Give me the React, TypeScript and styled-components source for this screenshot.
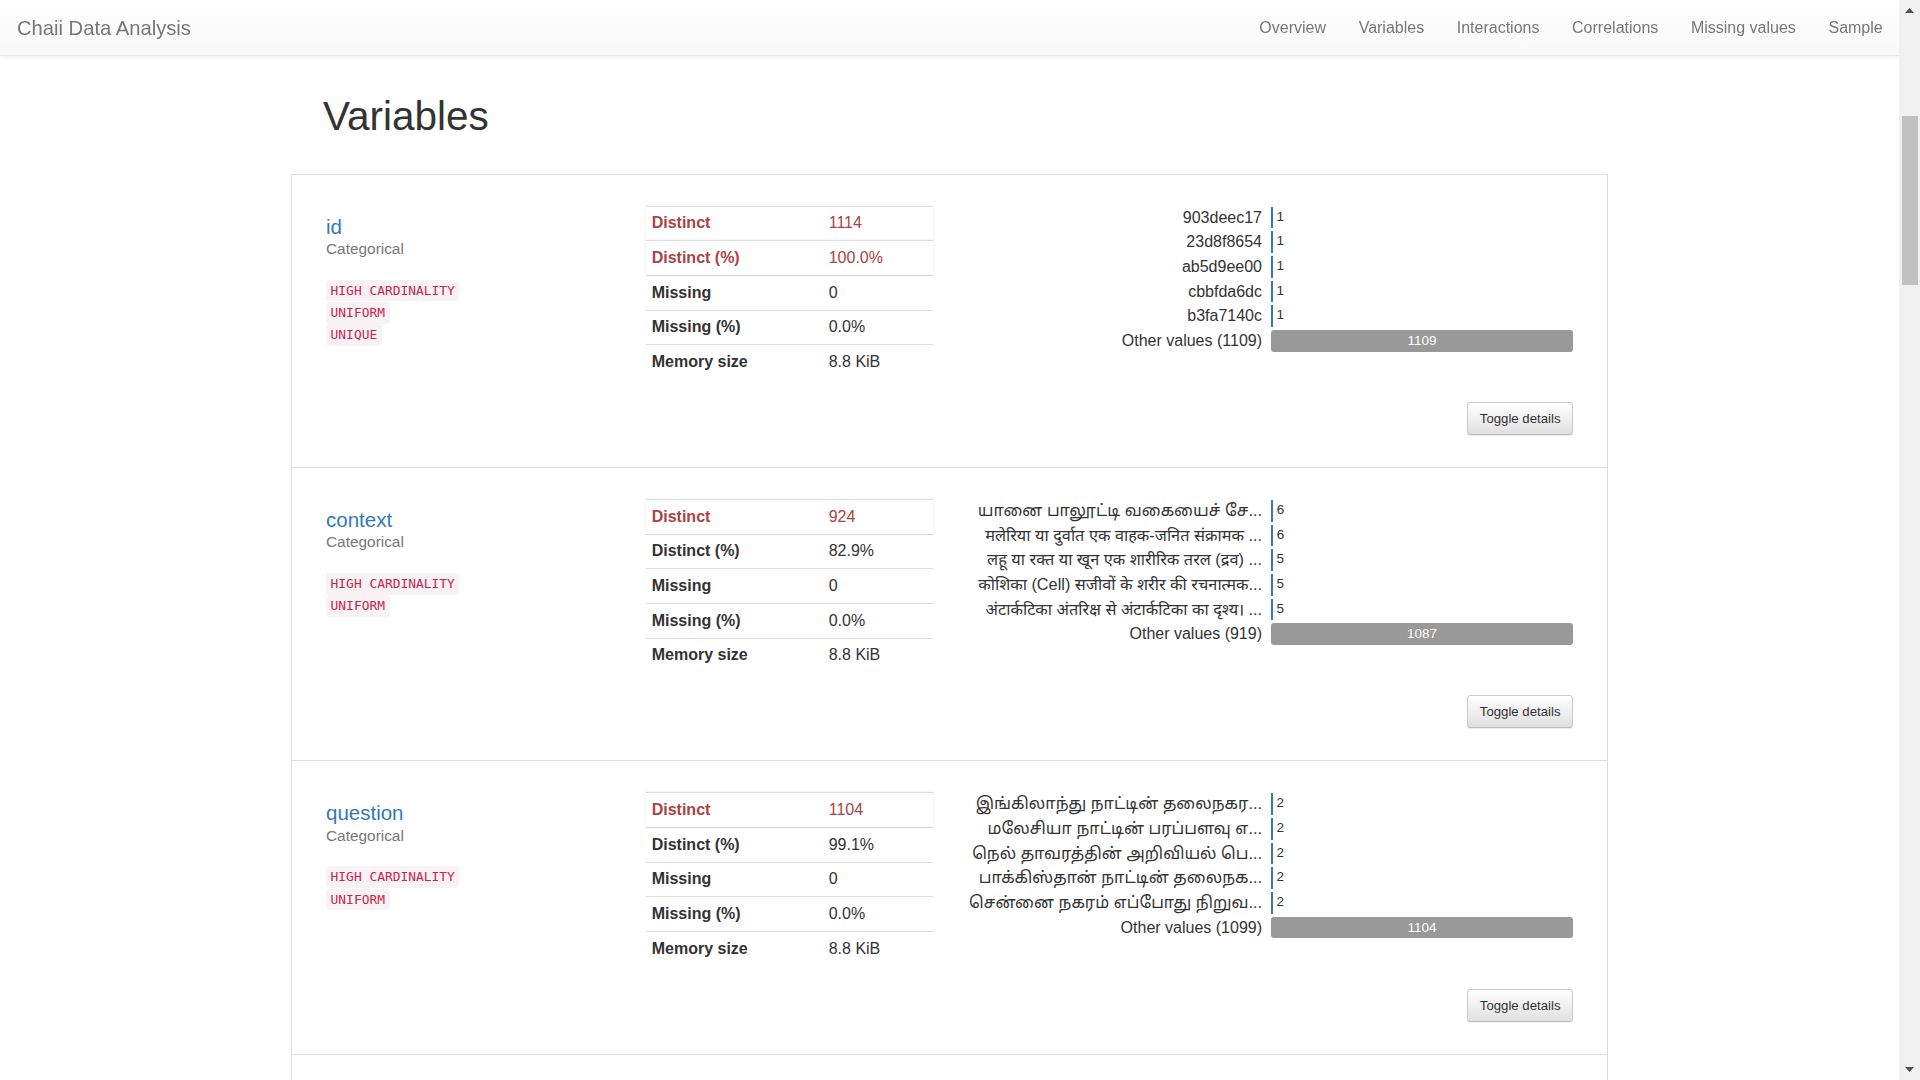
import React from 'react';
import styled, { createGlobalStyle } from 'styled-components';

const GlobalStyle = createGlobalStyle`
  html, body {
    margin: 0;
    padding: 0;
    background: #fff;
  }
  body {
    font-family: "Liberation Sans", Arial, "Noto Sans Tamil", "Noto Sans Devanagari", "Lohit Tamil", "Lohit Devanagari", "FreeSans", sans-serif;
    font-size: 16px;
    line-height: 1.42857;
    color: #333;
  }
  *, *::before, *::after {
    box-sizing: border-box;
  }
`;

/* Window: page column + classic scrollbar rail */
const Shell = styled.div`
  display: grid;
  grid-template-columns: 1fr 21px;
  height: 100vh;
  overflow: hidden;
`;

const MainColumn = styled.div`
  min-width: 0;
  height: 100vh;
  overflow: hidden;
`;

const ScrollRail = styled.div`
  display: flex;
  flex-direction: column;
  height: 100vh;
  background: #f1f1f1;
`;

const ScrollButton = styled.div`
  flex: none;
  height: 21px;
  display: flex;
  align-items: center;
  justify-content: center;
`;

const ScrollTrack = styled.div`
  flex: 1;
  padding: 95px 2.5px 0;
`;

const ScrollThumb = styled.div`
  height: 169px;
  background: #c1c1c1;
`;

const Navbar = styled.nav`
  position: sticky;
  top: 0;
  z-index: 10;
  height: 56px;
  display: flex;
  align-items: center;
  justify-content: space-between;
  padding: 0 0 0 17px;
  background-image: linear-gradient(to bottom, #ffffff 0, #f8f8f8 100%);
  border-bottom: 1px solid #e7e7e7;
  box-shadow: 0 1px 5px rgba(0, 0, 0, 0.075);
`;

const Brand = styled.a`
  font-size: 20.2px;
  line-height: 56px;
  color: #777;
  text-decoration: none;
`;

const NavList = styled.ul`
  display: flex;
  list-style: none;
  margin: 0;
  padding: 0;
`;

const NavLink = styled.a`
  display: block;
  padding: 0 16.3px;
  font-size: 16px;
  line-height: 54px;
  color: #777;
  text-decoration: none;
`;

const Page = styled.main`
  padding-bottom: 40px;
`;

const Container = styled.div`
  width: 1317px;
  margin: 0 auto;
`;

const Section = styled.section`
  display: flow-root;
  padding-top: 38px;
`;

const SectionTitle = styled.h1`
  margin: 0 0 35px 32px;
  font-size: 40.5px;
  font-weight: 500;
  line-height: 1.1;
  color: #333;
`;

const VariableList = styled.div`
  display: flex;
  flex-direction: column;
`;

const VariableCard = styled.article`
  border: 1px solid #ddd;
  margin-bottom: -1px;
  padding: 31px 34px 32px;
  background: #fff;
`;

const VarGrid = styled.div`
  display: grid;
  grid-template-columns: 320px 287px 1fr;
  align-items: start;
`;

const InfoColumn = styled.div`
  display: flex;
  flex-direction: column;
  align-items: flex-start;
`;

const VarName = styled.p`
  margin: 10px 0 19px;
  font-size: 20.5px;
  line-height: 1.1;
`;

const VarLink = styled.a`
  color: #337ab7;
  text-decoration: none;
`;

const VarType = styled.small`
  display: block;
  font-size: 15.4px;
  line-height: 22.5px;
  color: #777;
`;

const Badges = styled.div`
  display: flex;
  flex-direction: column;
  align-items: flex-start;
  gap: 0.5px;
`;

const Badge = styled.code`
  font-family: "DejaVu Sans Mono", "Liberation Mono", monospace;
  font-size: 12.9px;
  line-height: 15.7px;
  padding: 3px 4.6px;
  color: #c7254e;
  background: #f9f2f4;
  border-radius: 4px;
`;

const StatsTable = styled.div`
  display: flex;
  flex-direction: column;
  margin-bottom: 23px;
`;

const StatRow = styled.div<{ $alert?: boolean }>`
  display: grid;
  grid-template-columns: 177px 1fr;
  border-top: 1px solid #ddd;
  color: ${(p) => (p.$alert ? '#a94442' : '#333')};
  background: #fff;
  box-shadow: ${(p) => (p.$alert ? '0 0 3px rgba(0, 0, 0, 0.09)' : 'none')};
  position: ${(p) => (p.$alert ? 'relative' : 'static')};
`;

const StatLabel = styled.div`
  padding: 5.7px;
  line-height: 22.3px;
  font-weight: bold;
`;

const StatValue = styled.div`
  padding: 5.7px;
  line-height: 22.3px;
`;

const FreqTable = styled.div`
  display: flex;
  flex-direction: column;
  gap: 3px;
  padding: 1px 0 0 33px;
`;

const FreqRow = styled.div`
  display: grid;
  grid-template-columns: 296px 1fr;
  column-gap: 9px;
  height: 21.7px;
  align-items: center;
`;

const FreqLabel = styled.div<{ $native?: boolean }>`
  display: flex;
  justify-content: flex-end;
  white-space: nowrap;
  font-size: ${(p) => (p.$native ? '16.3px' : '16px')};
  line-height: 21.7px;
  color: #333;
`;

const BarCell = styled.div`
  display: flex;
  align-items: center;
  height: 100%;
`;

const Bar = styled.div<{ $other?: boolean }>`
  height: 100%;
  min-width: 1.5px;
  flex: none;
  display: flex;
  align-items: center;
  justify-content: center;
  background: ${(p) => (p.$other ? '#999' : '#337ab7')};
  border-radius: ${(p) => (p.$other ? '3px' : '0')};
  color: #fff;
  font-size: 13.5px;
  line-height: 1;
`;

const OutsideCount = styled.span`
  margin-left: 4px;
  font-size: 13.5px;
  line-height: 1;
  color: #333;
  transform: translateY(-1.5px);
`;

const ToggleRow = styled.div`
  display: flex;
  justify-content: flex-end;
`;

const ToggleButton = styled.button`
  height: 33px;
  padding: 0 11.5px;
  font-family: inherit;
  font-size: 13.2px;
  color: #333;
  background-image: linear-gradient(to bottom, #ffffff 0, #e0e0e0 100%);
  border: 1px solid #ccc;
  border-bottom-color: #bdbdbd;
  border-radius: 3.4px;
  box-shadow: inset 0 1px 0 rgba(255, 255, 255, 0.15), 0 1px 1px rgba(0, 0, 0, 0.075);
  cursor: pointer;
`;

type Stat = { label: string; value: string; alert?: boolean };
type Freq = { label: string; count: number };
type Variable = {
  name: string;
  badges: string[];
  stats: Stat[];
  freq: Freq[];
  other: Freq;
};

const variables: Variable[] = [
  {
    name: 'id',
    badges: ['HIGH CARDINALITY', 'UNIFORM', 'UNIQUE'],
    stats: [
      { label: 'Distinct', value: '1114', alert: true },
      { label: 'Distinct (%)', value: '100.0%', alert: true },
      { label: 'Missing', value: '0' },
      { label: 'Missing (%)', value: '0.0%' },
      { label: 'Memory size', value: '8.8 KiB' },
    ],
    freq: [
      { label: '903deec17', count: 1 },
      { label: '23d8f8654', count: 1 },
      { label: 'ab5d9ee00', count: 1 },
      { label: 'cbbfda6dc', count: 1 },
      { label: 'b3fa7140c', count: 1 },
    ],
    other: { label: 'Other values (1109)', count: 1109 },
  },
  {
    name: 'context',
    badges: ['HIGH CARDINALITY', 'UNIFORM'],
    stats: [
      { label: 'Distinct', value: '924', alert: true },
      { label: 'Distinct (%)', value: '82.9%' },
      { label: 'Missing', value: '0' },
      { label: 'Missing (%)', value: '0.0%' },
      { label: 'Memory size', value: '8.8 KiB' },
    ],
    freq: [
      { label: 'யானை பாலூட்டி வகையைச் சே...', count: 6 },
      { label: 'मलेरिया या दुर्वात एक वाहक-जनित संक्रामक ...', count: 6 },
      { label: 'लहू या रक्त या खून एक शारीरिक तरल (द्रव) ...', count: 5 },
      { label: 'कोशिका (Cell) सजीवों के शरीर की रचनात्मक...', count: 5 },
      { label: 'अंटार्कटिका अंतरिक्ष से अंटार्कटिका का दृश्य। ...', count: 5 },
    ],
    other: { label: 'Other values (919)', count: 1087 },
  },
  {
    name: 'question',
    badges: ['HIGH CARDINALITY', 'UNIFORM'],
    stats: [
      { label: 'Distinct', value: '1104', alert: true },
      { label: 'Distinct (%)', value: '99.1%' },
      { label: 'Missing', value: '0' },
      { label: 'Missing (%)', value: '0.0%' },
      { label: 'Memory size', value: '8.8 KiB' },
    ],
    freq: [
      { label: 'இங்கிலாந்து நாட்டின் தலைநகர...', count: 2 },
      { label: 'மலேசியா நாட்டின் பரப்பளவு எ...', count: 2 },
      { label: 'நெல் தாவரத்தின் அறிவியல் பெ...', count: 2 },
      { label: 'பாக்கிஸ்தான் நாட்டின் தலைநக...', count: 2 },
      { label: 'சென்னை நகரம் எப்போது நிறுவ...', count: 2 },
    ],
    other: { label: 'Other values (1099)', count: 1104 },
  },
  {
    name: 'answer_text',
    badges: ['HIGH CARDINALITY'],
    stats: [
      { label: 'Distinct', value: '963', alert: true },
      { label: 'Distinct (%)', value: '86.4%' },
      { label: 'Missing', value: '0' },
      { label: 'Missing (%)', value: '0.0%' },
      { label: 'Memory size', value: '8.8 KiB' },
    ],
    freq: [
      { label: '1947', count: 10 },
      { label: 'இந்தியா', count: 8 },
      { label: 'भारत', count: 7 },
      { label: '1948', count: 6 },
      { label: 'சென்னை', count: 5 },
    ],
    other: { label: 'Other values (958)', count: 1078 },
  },
];

const navItems = ['Overview', 'Variables', 'Interactions', 'Correlations', 'Missing values', 'Sample'];

const isNative = (s: string) => /[^\u0000-\u024f]/.test(s);

function FrequencyTable({ freq, other }: { freq: Freq[]; other: Freq }) {
  const max = Math.max(other.count, ...freq.map((f) => f.count));
  return (
    <FreqTable>
      {freq.map((f, i) => (
        <FreqRow key={i}>
          <FreqLabel $native={isNative(f.label)}>{f.label}</FreqLabel>
          <BarCell>
            <Bar style={{ width: `${(f.count / max) * 100}%` }} />
            <OutsideCount>{f.count}</OutsideCount>
          </BarCell>
        </FreqRow>
      ))}
      <FreqRow>
        <FreqLabel>{other.label}</FreqLabel>
        <BarCell>
          <Bar $other style={{ width: `${(other.count / max) * 100}%` }}>
            {other.count}
          </Bar>
        </BarCell>
      </FreqRow>
    </FreqTable>
  );
}

function VariableSection({ v }: { v: Variable }) {
  return (
    <VariableCard id={v.name}>
      <VarGrid>
        <InfoColumn>
          <VarName>
            <VarLink href={`#${v.name}`}>{v.name}</VarLink>
            <VarType>Categorical</VarType>
          </VarName>
          <Badges>
            {v.badges.map((b) => (
              <Badge key={b}>{b}</Badge>
            ))}
          </Badges>
        </InfoColumn>
        <StatsTable>
          {v.stats.map((s) => (
            <StatRow key={s.label} $alert={s.alert}>
              <StatLabel>{s.label}</StatLabel>
              <StatValue>{s.value}</StatValue>
            </StatRow>
          ))}
        </StatsTable>
        <FrequencyTable freq={v.freq} other={v.other} />
      </VarGrid>
      <ToggleRow>
        <ToggleButton type="button">Toggle details</ToggleButton>
      </ToggleRow>
    </VariableCard>
  );
}

function Arrow({ down }: { down?: boolean }) {
  return (
    <svg width="9" height="5" viewBox="0 0 9 5" aria-hidden="true">
      <polygon points={down ? '0,0 9,0 4.5,5' : '0,5 9,5 4.5,0'} fill="#505050" />
    </svg>
  );
}

export default function App() {
  return (
    <>
      <GlobalStyle />
      <Shell>
        <MainColumn>
          <Navbar>
            <Brand href="#">Chaii Data Analysis</Brand>
            <NavList>
              {navItems.map((n) => (
                <li key={n}>
                  <NavLink href={`#${n}`}>{n}</NavLink>
                </li>
              ))}
            </NavList>
          </Navbar>
          <Page>
            <Container>
              <Section id="Variables">
                <SectionTitle>Variables</SectionTitle>
                <VariableList>
                  {variables.map((v) => (
                    <VariableSection key={v.name} v={v} />
                  ))}
                </VariableList>
              </Section>
            </Container>
          </Page>
        </MainColumn>
        <ScrollRail aria-hidden="true">
          <ScrollButton>
            <Arrow />
          </ScrollButton>
          <ScrollTrack>
            <ScrollThumb />
          </ScrollTrack>
          <ScrollButton>
            <Arrow down />
          </ScrollButton>
        </ScrollRail>
      </Shell>
    </>
  );
}
